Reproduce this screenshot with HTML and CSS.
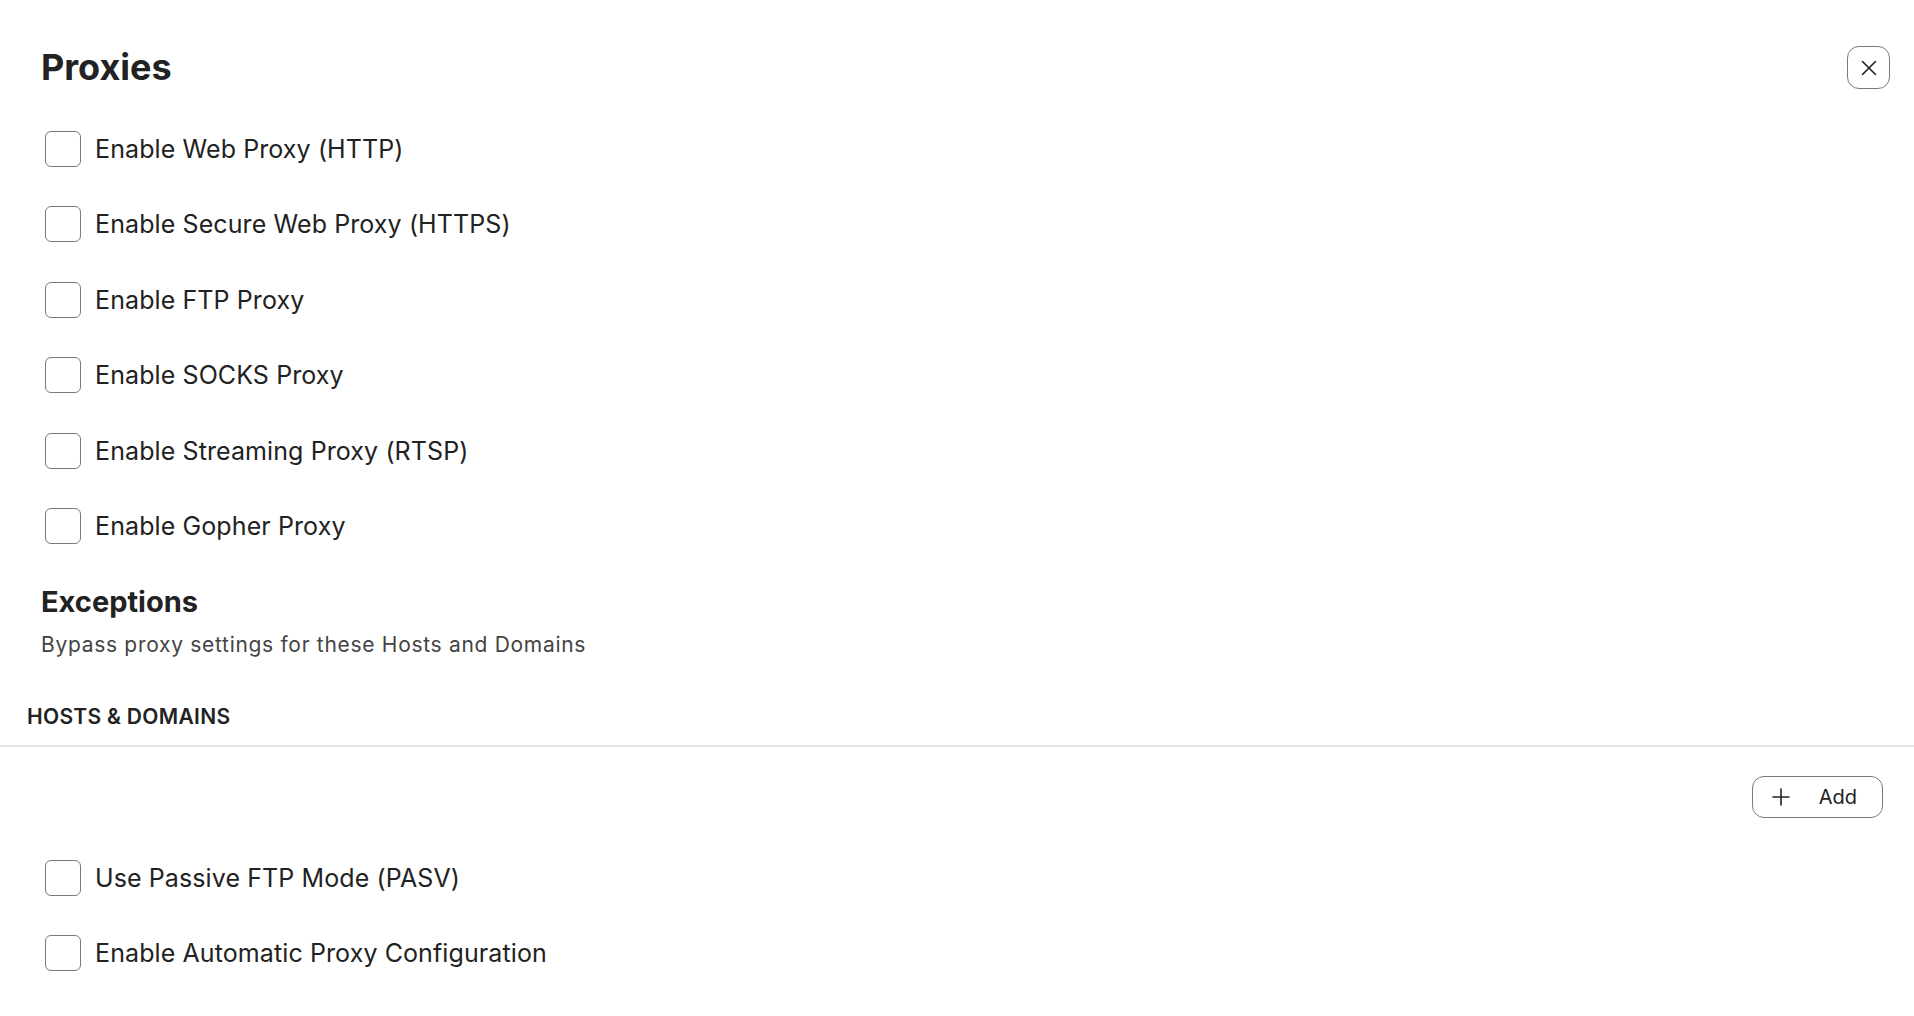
FILE: index.html
```html
<!DOCTYPE html>
<html lang="en">
<head>
    <meta charset="UTF-8">
    <meta name="viewport" content="width=device-width, initial-scale=1.0">
    <title>Proxies</title>
    <link rel="stylesheet" href="styles.css">
</head>
<body>
    <main class="sheet">
        <header class="sheet-head">
            <h1 class="sheet-title">Proxies</h1>
            <button class="icon-btn" type="button" aria-label="Close">
                <svg width="16" height="16" viewBox="0 0 16 16" fill="none" stroke="#222" stroke-width="1.6" stroke-linecap="round">
                    <path d="M1.5 1.5 L14.5 14.5 M14.5 1.5 L1.5 14.5"/>
                </svg>
            </button>
        </header>

        <ul class="options">
            <li><label class="option"><input type="checkbox"><span>Enable Web Proxy (HTTP)</span></label></li>
            <li><label class="option"><input type="checkbox"><span>Enable Secure Web Proxy (HTTPS)</span></label></li>
            <li><label class="option"><input type="checkbox"><span>Enable FTP Proxy</span></label></li>
            <li><label class="option"><input type="checkbox"><span>Enable SOCKS Proxy</span></label></li>
            <li><label class="option"><input type="checkbox"><span>Enable Streaming Proxy (RTSP)</span></label></li>
            <li><label class="option"><input type="checkbox"><span>Enable Gopher Proxy</span></label></li>
        </ul>

        <section class="exceptions">
            <h2 class="section-title">Exceptions</h2>
            <p class="section-desc">Bypass proxy settings for these Hosts and Domains</p>
        </section>

        <div class="table-head">HOSTS &amp; DOMAINS</div>
        <div class="table-actions">
            <button class="add-btn" type="button">
                <svg width="18" height="18" viewBox="0 0 18 18" fill="none" stroke="#222" stroke-width="1.6" stroke-linecap="round">
                    <path d="M9 1 V17 M1 9 H17"/>
                </svg>
                <span>Add</span>
            </button>
        </div>

        <ul class="options options-bottom">
            <li><label class="option"><input type="checkbox"><span>Use Passive FTP Mode (PASV)</span></label></li>
            <li><label class="option"><input type="checkbox"><span>Enable Automatic Proxy Configuration</span></label></li>
        </ul>
    </main>
</body>
</html>
```

FILE: styles.css
```css
* {
    margin: 0;
    padding: 0;
    box-sizing: border-box;
}
ul,li {
    list-style: none;
}
body {
    background: #fff;
    color: #222;
    font-family: Inter, "Noto Sans", sans-serif;
}
.sheet {
    padding-top: 46px;
}
.sheet-head {
    display: flex;
    justify-content: space-between;
    align-items: center;
    padding: 0 24px 0 41px;
}
.sheet-title {
    font-size: 36px;
    font-weight: 700;
    line-height: 43px;
    color: #222;
}
.icon-btn {
    width: 43px;
    height: 43px;
    border: 1px solid #7a7a7a;
    border-radius: 12px;
    background: #fff;
    display: flex;
    align-items: center;
    justify-content: center;
}
.options {
    margin-top: 22px;
    padding-left: 45px;
}
.option {
    display: flex;
    align-items: center;
    gap: 14px;
    height: 75.5px;
    font-size: 25px;
    letter-spacing: 0.1px;
    color: #222;
}
.option input {
    appearance: none;
    width: 36px;
    height: 36px;
    border: 1px solid #7a7a7a;
    border-radius: 6px;
    background: #fff;
    flex: none;
}
.exceptions {
    margin-top: 21px;
    padding-left: 41px;
}
.section-title {
    font-size: 29px;
    font-weight: 700;
    line-height: 34px;
}
.section-desc {
    margin-top: 12px;
    font-size: 21px;
    line-height: 28px;
    color: #444;
    letter-spacing: 0.7px;
}
.table-head {
    margin-top: 44px;
    padding: 0 0 14px 27px;
    font-size: 21px;
    font-weight: 600;
    letter-spacing: 0.3px;
    line-height: 28px;
    border-bottom: 2px solid #e6e6e6;
}
.table-actions {
    display: flex;
    justify-content: flex-end;
    padding: 29px 31px 0 0;
}
.add-btn {
    display: flex;
    align-items: center;
    gap: 29px;
    height: 42px;
    padding: 0 25px 0 19px;
    border: 1px solid #7a7a7a;
    border-radius: 12px;
    background: #fff;
    font-family: Inter, "Noto Sans", sans-serif;
    font-size: 20px;
    color: #222;
}
.options-bottom {
    margin-top: 22px;
}
```
